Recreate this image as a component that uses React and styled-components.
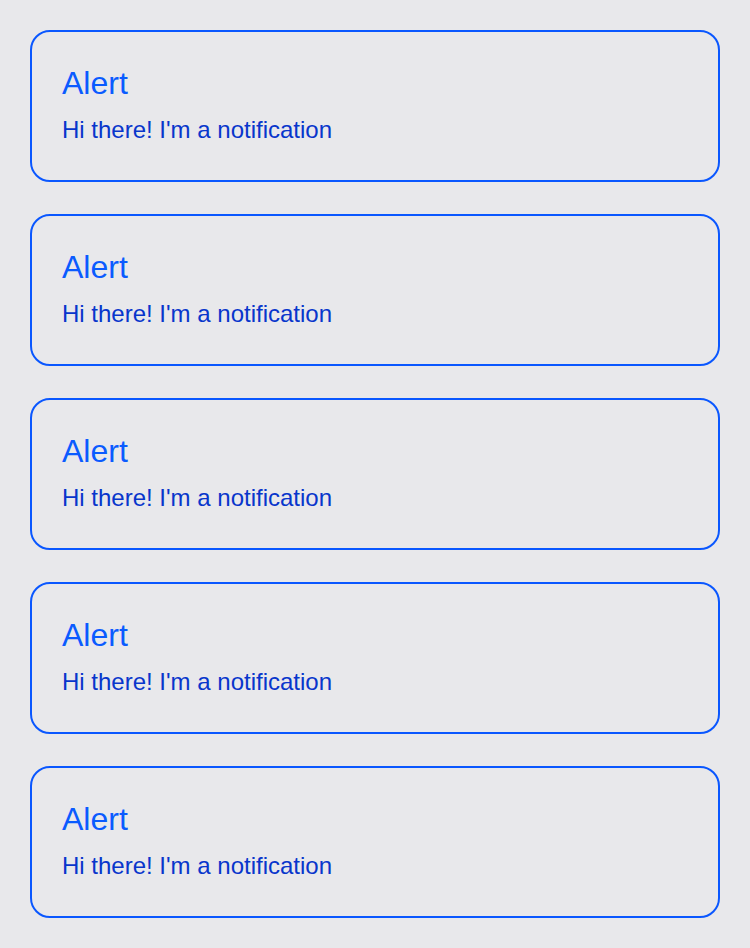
import React from "react";
import styled, { createGlobalStyle } from "styled-components";

const Global = createGlobalStyle`
  html, body { margin: 0; padding: 0; background: #e8e8eb; }
  body { font-family: "Liberation Sans", Arial, sans-serif; }
`;

const Page = styled.main`
  display: flex;
  flex-direction: column;
  gap: 32px;
  padding: 30px;
  background: #e8e8eb;
  min-height: 948px;
  box-sizing: border-box;
`;

const Card = styled.section`
  border: 2px solid #0a57ff;
  border-radius: 20px;
  padding: 33px 30px 36px;
  display: flex;
  flex-direction: column;
  gap: 15px;
`;

const Title = styled.h2`
  margin: 0;
  font-size: 32px;
  line-height: 36px;
  font-weight: 400;
  color: #0a5bff;
`;

const Message = styled.p`
  margin: 0;
  font-size: 24px;
  line-height: 28px;
  color: #0836cc;
`;

export default function App() {
  const items = [1, 2, 3, 4, 5];
  return (
    <>
      <Global />
      <Page>
        {items.map((i) => (
          <Card key={i}>
            <Title>Alert</Title>
            <Message>Hi there! I'm a notification</Message>
          </Card>
        ))}
      </Page>
    </>
  );
}
